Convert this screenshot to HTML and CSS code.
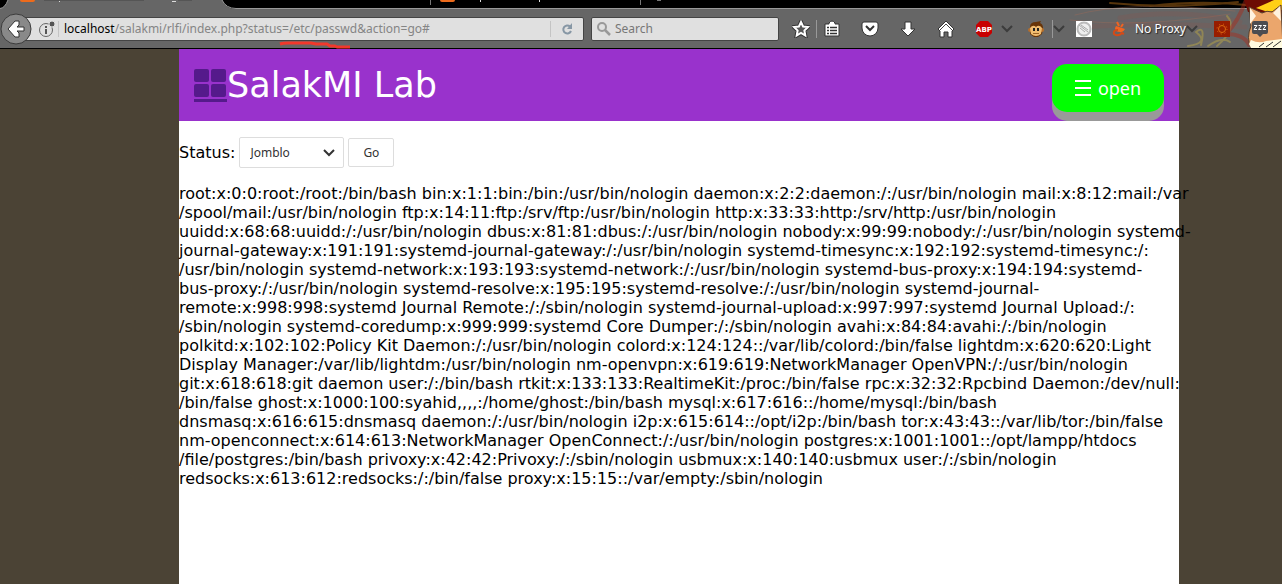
FILE: index.html
```html
<!DOCTYPE html>
<html lang="en">
<head>
<meta charset="utf-8">
<meta name="viewport" content="width=device-width, initial-scale=1">
<title>SalakMI Lab</title>
<link rel="stylesheet" href="styles.css">
</head>
<body>
<div class="browser">
  <div class="tabs">
    <svg class="tabs-art" width="1282" height="9" viewBox="0 0 1282 9" aria-hidden="true">
      <path d="M0 9V8.500Q5 8 8 0H222Q226 9 236 9z" fill="#666"/>
      <path d="M0 8.500Q5 8 8 0M222 0Q226 8.500 236 8.500H1282" fill="none" stroke="#999"/>
      <path d="M20 0h15q0 2-2 2H22q-2 0-2-2zM440 0h15q0 2-2 2h-11q-2 0-2-2z" fill="#ed6b1c"/>
      <path d="M430.500 0v5M640.500 0v5" stroke="#777"/>
      <path d="M480.500 0v2M539.500 0v2" stroke="#ddd"/>
      <path d="M657 .5h4" stroke="#777"/>
      <path d="M59.500 0v2M172 1.500h4" stroke="#ddd"/>
      <path d="M44 .5h100M178 .5h14" stroke="#555"/>
    </svg>
  </div>
  <div class="toolbar">
    <svg class="theme-art" width="262" height="48" viewBox="0 0 262 48" aria-hidden="true">
      <g fill="none" stroke-linecap="round">
        <path d="M55 15Q110 0 215 11M50 20Q120 28 210 14" stroke="#a26a55" stroke-width="1" opacity=".4"/>
        <path d="M90 3Q150 9 218 2M130 6Q180 0 226 5" stroke="#7a4a10" stroke-width="2" opacity=".7"/>
        <path d="M62 27Q130 22 225 27M100 18Q160 8 220 22" stroke="#985047" stroke-width="5" opacity=".2"/>
        <path d="M168 46Q190 43 176 32Q186 24 181 45M188 46Q202 36 210 42M197 46Q218 28 207 16" stroke="#b8a346" stroke-width="2" opacity=".5"/>
        <path d="M226 0Q218 22 206 34Q224 34 229 45" stroke="#a82a1a" stroke-width="4" opacity=".45"/>
      </g>
      <path d="M224 0h38v14l-34-2z" fill="#6d0c04"/>
      <path d="M236 8l18-8h8v10l-14 2z" fill="#ffcf16"/>
      <path d="M229 7l13 6q5-3 10-1l9-7 2 43h-32q-5-10 0-22z" fill="#eba66c" stroke="#59402c"/>
      <path d="M230 8l6 8-6 8zM253 13l7-7 1 15z" fill="#fff2de"/>
      <path d="M229 44l2-4q8 4 15 1l16-2v9h-31z" fill="#fffbe0"/>
      <path d="M239 47l5-4M246 47l7-5M253 47l8-6" stroke="#333"/>
    </svg>
    <div class="address">
      <button class="back" aria-label="Back"><svg width="32" height="32" viewBox="0 0 32 32"><circle cx="16" cy="16" r="15" fill="#898989" stroke="#3c3c3c"/><path d="M15 8L8 16l7 8h4v-4l-2-2h7v-4h-7l2-2V8z" fill="#fff" stroke="#333"/></svg></button>
      <div class="field url">
        <svg width="18" height="18" viewBox="0 0 18 18" aria-hidden="true"><circle cx="8" cy="10" r="6.500" fill="none" stroke="#666"/><path d="M8 6v2M8 9v5" stroke="#555" stroke-width="2"/><circle cx="14" cy="4" r="3" fill="#555" stroke="#e0e0e0"/></svg>
        <span class="rule"></span>
        <a class="path" href="#"><b>localhost</b>/salakmi/rlfi/index.php?status=/etc/passwd&amp;action=go#</a>
        <button class="reload" aria-label="Reload"><svg width="12" height="12" viewBox="0 0 12 12"><path d="M9 3.500A4 4 0 1 0 10 8" fill="none" stroke="#8797a5" stroke-width="2"/><path d="M11 0v6H6z" fill="#8797a5"/></svg></button>
      </div>
      <svg class="underline" width="76" height="8" viewBox="0 0 76 8" aria-hidden="true"><path d="M2 3Q5 2 10 2H33L38 3H49L52 5H57L59 6H72" fill="none" stroke="#f2382b" stroke-width="3" stroke-linejoin="round"/></svg>
    </div>
    <label class="field search"><svg width="16" height="16" viewBox="0 0 16 16" aria-hidden="true"><circle cx="6" cy="6" r="4" fill="none" stroke="#999" stroke-width="2"/><path d="M9 9l5 5" stroke="#999" stroke-width="2.500"/></svg><input type="search" placeholder="Search" aria-label="Search"></label>
    <div class="tools">
      <svg class="t-star" width="18" height="18" viewBox="0 0 18 18"><path d="M9 2l2.100 4.500 4.900.6-3.600 3.400.9 5L9 13l-4.300 2.500.9-5L2 7.100l4.900-.6z" fill="none" stroke="#333" stroke-width="4"/><path d="M9 2l2.100 4.500 4.900.6-3.600 3.400.9 5L9 13l-4.300 2.500.9-5L2 7.100l4.900-.6z" fill="#555" stroke="#fff" stroke-width="2"/></svg>
      <span class="divider"></span>
      <svg class="t-list" width="18" height="18" viewBox="0 0 18 18"><path d="M2 4h4V3q3-4 6 0v1h4v12H2z" fill="#fff" stroke="#333"/><path d="M4 7.500h2M7 7.500h7M4 10.500h2M7 10.500h7M4 13.500h2M7 13.500h7" stroke="#333" stroke-width="1.500"/></svg>
      <svg class="t-pocket" width="18" height="18" viewBox="0 0 18 18"><path d="M3 2h12q2 0 2 2v4a8 8 0 0 1-16 0V4q0-2 2-2z" fill="#fff" stroke="#333"/><path d="M5 6l4 4 4-4" fill="none" stroke="#333" stroke-width="2"/></svg>
      <svg class="t-down" width="18" height="18" viewBox="0 0 18 18"><path d="M6 2h6v7h4l-7 7-7-7h4z" fill="#fff" stroke="#333"/></svg>
      <svg class="t-home" width="18" height="18" viewBox="0 0 18 18"><path d="M9 1l8 8-2 2v6h-4v-5H7v5H3v-6L1 9z" fill="#fff" stroke="#333"/><path d="M3 10l6-6 6 6" fill="none" stroke="#444"/></svg>
      <svg class="t-abp" width="18" height="18" viewBox="0 0 18 18"><path d="M5 1h8l4 4v8l-4 4H5l-4-4V5z" fill="#c80000"/><text x="9" y="12" text-anchor="middle" class="abp">ABP</text></svg>
      <svg class="t-chev1" width="12" height="18" viewBox="0 0 12 18"><path d="M1 6l5 5 5-5" fill="none" stroke="#3c3c3c" stroke-width="2"/></svg>
      <svg class="t-monkey" width="18" height="18" viewBox="0 0 18 18"><path d="M3 7Q3 2 9 2l5-1-1 2q3 1 3 5l-1 6-4 3H7l-4-3z" fill="#673408"/><circle cx="3" cy="10" r="2" fill="#b66e2b"/><circle cx="15" cy="10" r="2" fill="#b66e2b"/><path d="M3 8q3-4 6-1 3-3 6 1l-1 6q-5 4-10 0z" fill="#f0bc70"/><path d="M7 8v3M11 8v3" stroke="#222" stroke-width="2"/><path d="M6 13.500h6" stroke="#9d6426"/></svg>
      <span class="divider"></span>
      <svg class="t-chev2" width="12" height="18" viewBox="0 0 12 18"><path d="M1 6l5 5 5-5" fill="none" stroke="#3c3c3c" stroke-width="2"/></svg>
      <svg class="t-globe" width="16" height="16" viewBox="0 0 16 16"><path d="M0 0h16v16H0z" fill="#fff"/><circle cx="8" cy="8" r="6.500" fill="#eee" stroke="#bbb" stroke-width="2"/><path d="M3 4l9 7M5 4l7 5M4 7l5 4" stroke="#aaa"/></svg>
      <svg class="t-plug" width="16" height="16" viewBox="0 0 16 16"><path d="M5 1l2 4M11 3L9 6" stroke="#f06422" stroke-width="2"/><path d="M4 5l9 3q-2 4-5 3-5 0-5-4z" fill="#f06422"/><path d="M6 9q-5 0-4 4 4 3 8-1l2 1" fill="none" stroke="#d44a18" stroke-width="2"/></svg>
      <button class="proxy">No Proxy</button>
      <svg class="t-chev3" width="12" height="18" viewBox="0 0 12 18"><path d="M1 6l5 5 5-5" fill="none" stroke="#3c3c3c" stroke-width="2"/></svg>
      <svg class="t-sun" width="16" height="16" viewBox="0 0 16 16"><path d="M0 0h16v16H0z" fill="#981d00"/><circle cx="8" cy="8" r="3.500" fill="none" stroke="#e06a10"/><circle cx="8" cy="8" r="5" fill="none" stroke="#e06a10" stroke-dasharray="1 3"/></svg>
      <svg class="t-zzz" width="18" height="18" viewBox="0 0 18 18"><path d="M3 1h12q2 0 2 2v9q0 2-2 2h-3l-3 3-3-3H3q-2 0-2-2V3q0-2 2-2z" fill="#4c4c50"/><path d="M3 5.500h3l-3 4h3M7.500 5.500h3l-3 4h3M12 5.500h3l-3 4h3" fill="none" stroke="#fff"/></svg>
    </div>
  </div>
</div>
<main class="page">
  <header class="header">
    <h1 class="brand"><svg width="33" height="34" viewBox="0 0 33 34" aria-hidden="true"><g fill="#551a8b"><rect width="15" height="13" rx="2"/><rect x="17" width="15" height="13" rx="2"/><rect y="15" width="15" height="13" rx="2"/><rect x="17" y="15" width="15" height="13" rx="2"/><path d="M0 30h33v3H0z"/></g></svg>SalakMI Lab</h1>
    <button class="open"><svg width="16" height="16" viewBox="0 0 16 16" aria-hidden="true"><path d="M0 1h16M0 8h16M0 15h16" stroke="#fff" stroke-width="2"/></svg>open</button>
  </header>
  <form class="form">
    <label for="status">Status:</label>
    <span class="choice"><select id="status"><option>Jomblo</option></select><svg width="12" height="8" viewBox="0 0 12 8" aria-hidden="true"><path d="M1 1l5 5 5-5" fill="none" stroke="#333" stroke-width="2"/></svg></span>
    <button class="go" type="button">Go</button>
  </form>
  <p class="output">root:x:0:0:root:/root:/bin/bash bin:x:1:1:bin:/bin:/usr/bin/nologin daemon:x:2:2:daemon:/:/usr/bin/nologin mail:x:8:12:mail:/var<br>
/spool/mail:/usr/bin/nologin ftp:x:14:11:ftp:/srv/ftp:/usr/bin/nologin http:x:33:33:http:/srv/http:/usr/bin/nologin<br>
uuidd:x:68:68:uuidd:/:/usr/bin/nologin dbus:x:81:81:dbus:/:/usr/bin/nologin nobody:x:99:99:nobody:/:/usr/bin/nologin systemd-<br>
journal-gateway:x:191:191:systemd-journal-gateway:/:/usr/bin/nologin systemd-timesync:x:192:192:systemd-timesync:/:<br>
/usr/bin/nologin systemd-network:x:193:193:systemd-network:/:/usr/bin/nologin systemd-bus-proxy:x:194:194:systemd-<br>
bus-proxy:/:/usr/bin/nologin systemd-resolve:x:195:195:systemd-resolve:/:/usr/bin/nologin systemd-journal-<br>
remote:x:998:998:systemd Journal Remote:/:/sbin/nologin systemd-journal-upload:x:997:997:systemd Journal Upload:/:<br>
/sbin/nologin systemd-coredump:x:999:999:systemd Core Dumper:/:/sbin/nologin avahi:x:84:84:avahi:/:/bin/nologin<br>
polkitd:x:102:102:Policy Kit Daemon:/:/usr/bin/nologin colord:x:124:124::/var/lib/colord:/bin/false lightdm:x:620:620:Light<br>
Display Manager:/var/lib/lightdm:/usr/bin/nologin nm-openvpn:x:619:619:NetworkManager OpenVPN:/:/usr/bin/nologin<br>
git:x:618:618:git daemon user:/:/bin/bash rtkit:x:133:133:RealtimeKit:/proc:/bin/false rpc:x:32:32:Rpcbind Daemon:/dev/null:<br>
/bin/false ghost:x:1000:100:syahid,,,,:/home/ghost:/bin/bash mysql:x:617:616::/home/mysql:/bin/bash<br>
dnsmasq:x:616:615:dnsmasq daemon:/:/usr/bin/nologin i2p:x:615:614::/opt/i2p:/bin/bash tor:x:43:43::/var/lib/tor:/bin/false<br>
nm-openconnect:x:614:613:NetworkManager OpenConnect:/:/usr/bin/nologin postgres:x:1001:1001::/opt/lampp/htdocs<br>
/file/postgres:/bin/bash privoxy:x:42:42:Privoxy:/:/sbin/nologin usbmux:x:140:140:usbmux user:/:/sbin/nologin<br>
redsocks:x:613:612:redsocks:/:/bin/false proxy:x:15:15::/var/empty:/sbin/nologin</p>
</main>
</body>
</html>
```
FILE: styles.css
```css
* { box-sizing: border-box; }
body {
  margin: 0;
  min-height: 100vh;
  display: flex;
  flex-direction: column;
  background: #4b4335;
  color: #000;
  font: 16px/19px "DejaVu Sans", sans-serif;
  overflow-x: hidden;
}
button, input, select { font: 12px/16px "Noto Sans", sans-serif; margin: 0; }
svg { display: block; flex: none; }
.tabs { height: 9px; background: #000; overflow: hidden; }
.toolbar {
  position: relative;
  display: flex;
  align-items: center;
  height: 40px;
  background: #666;
  border-bottom: 1px solid #000;
}
.theme-art { position: absolute; right: 0; bottom: 0; }
.address { position: relative; display: flex; align-items: center; width: 584px; }
.back { position: relative; z-index: 1; width: 32px; height: 32px; padding: 0; border: 0; background: none; }
.field {
  display: flex;
  align-items: center;
  height: 24px;
  background: #e0e0e0;
  border: 1px solid #444;
  border-radius: 2px;
}
.url { flex: 1; margin-left: -8px; padding: 0 8px 0 13px; }
.rule { width: 1px; height: 16px; margin: 0 5px 0 2px; background: #c4c4c4; }
.path { flex: 1; font: 12px/16px "Noto Sans", sans-serif; color: #858585; text-decoration: none; white-space: nowrap; }
.path b { font-weight: 400; color: #000; }
.reload { padding: 2px 2px 2px 10px; border: 0; border-left: 1px solid #c4c4c4; background: none; }
.underline { position: absolute; left: 278px; top: 28px; }
.search { width: 188px; margin-left: 7px; padding: 0 4px; gap: 3px; }
.search input { width: 100%; padding: 0; border: 0; background: none; outline: 0; }
.search input::placeholder { color: #777; opacity: 1; }
.tools { position: relative; display: flex; align-items: center; flex: 1; padding-left: 13px; }
.divider { width: 1px; height: 18px; background: #999; }
.t-star { margin-right: 6px; }
.t-list { margin-left: 6px; }
.t-pocket, .t-down, .t-home, .t-abp { margin-left: 20px; }
.abp { font: bold 7px "DejaVu Sans", sans-serif; fill: #fff; }
.t-chev1 { margin-left: 8px; }
.t-monkey { margin: 0 7px 0 14px; }
.t-globe { margin-left: 11px; }
.t-plug { margin-left: 20px; }
.proxy { padding: 0; margin-left: 7px; border: 0; background: none; color: #fff; text-shadow: 1px 1px 1px #222; white-space: nowrap; }
.t-sun { margin-left: 16px; }
.t-zzz { margin-left: 21px; }
.page { flex: 1; width: 100%; max-width: 1179px; padding-left: 179px; background: #fff; background-clip: content-box; }
.header { display: flex; justify-content: space-between; align-items: flex-start; height: 72px; padding: 15px; background: #9932cc; }
.brand { display: flex; align-items: center; margin: 0; font-size: 35px; line-height: 43px; font-weight: 400; color: #fff; }
.open {
  display: flex;
  align-items: center;
  justify-content: center;
  gap: 7px;
  width: 112px;
  height: 48px;
  border: 0;
  border-radius: 15px;
  background: #0f0;
  box-shadow: 0 9px #999;
  color: #fff;
  font-size: 18px;
  line-height: 24px;
}
.form { display: flex; align-items: center; gap: 4px; padding-top: 16px; }
.choice { display: grid; align-items: center; }
.choice select, .choice svg { grid-area: 1 / 1; }
.choice svg { justify-self: end; margin-right: 9px; pointer-events: none; }
select { appearance: none; width: 105px; height: 31px; padding: 0 10px; border: 1px solid #ddd; border-radius: 2px; background: #fff; color: #333; }
.go { width: 46px; height: 29px; padding: 0; border: 1px solid #ddd; border-radius: 2px; background: #fff; color: #333; }
.output { margin: 16px 0; white-space: nowrap; }
```
